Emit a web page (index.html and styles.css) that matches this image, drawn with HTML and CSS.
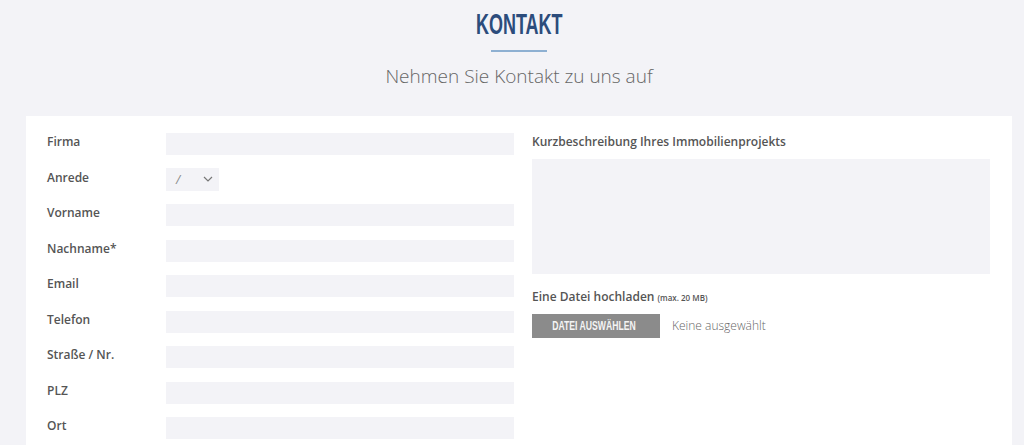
FILE: index.html
```html
<!DOCTYPE html>
<html>
  <head>
    <meta charset="utf-8">
    <title>Kontakt</title>
    <link rel="stylesheet" href="styles.css">
  </head>
  <body>
    <div class="header">
      <h1><span>KONTAKT</span></h1>
      <div class="divider"></div>
      <p class="subtitle">Nehmen Sie Kontakt zu uns auf</p>
    </div>
    <div class="card">
      <div class="col-left">
        <div class="field">
          <label for="firma">Firma</label>
          <input id="firma" type="text">
        </div>
        <div class="field">
          <label for="anrede">Anrede</label>
          <div class="select">
            <span class="select-value">/</span>
            <svg class="chevron" width="10" height="6" viewBox="0 0 10 6"><path d="M1 1l4 4 4-4" fill="none" stroke="#777" stroke-width="1.2"/></svg>
          </div>
        </div>
        <div class="field">
          <label for="vorname">Vorname</label>
          <input id="vorname" type="text">
        </div>
        <div class="field">
          <label for="nachname">Nachname*</label>
          <input id="nachname" type="text">
        </div>
        <div class="field">
          <label for="email">Email</label>
          <input id="email" type="text">
        </div>
        <div class="field">
          <label for="telefon">Telefon</label>
          <input id="telefon" type="text">
        </div>
        <div class="field">
          <label for="strasse">Straße / Nr.</label>
          <input id="strasse" type="text">
        </div>
        <div class="field">
          <label for="plz">PLZ</label>
          <input id="plz" type="text">
        </div>
        <div class="field">
          <label for="ort">Ort</label>
          <input id="ort" type="text">
        </div>
      </div>
      <div class="col-right">
        <label class="block-label" for="beschreibung">Kurzbeschreibung Ihres Immobilienprojekts</label>
        <textarea id="beschreibung"></textarea>
        <div class="block-label upload-label">Eine Datei hochladen <small>(max. 20 MB)</small></div>
        <div class="upload">
          <button class="upload-btn"><span>DATEI AUSWÄHLEN</span></button>
          <span class="upload-status">Keine ausgewählt</span>
        </div>
      </div>
    </div>
  </body>
</html>
```

FILE: styles.css
```css
* {
    box-sizing: border-box;
}

body {
    margin: 0;
    background: #f3f3f7;
    font-family: "Open Sans", "Liberation Sans", sans-serif;
    color: #555;
}

.header {
    text-align: center;
    padding-top: 9px;
    height: 116px;
    margin: 0 12px 0 26px;
}
h1 {
    margin: 0;
    font-family: "Liberation Sans Narrow", "Liberation Sans", sans-serif;
    font-size: 30px;
    line-height: 30px;
    font-weight: bold;
    color: #2c4c7c;
}
h1 span {
    display: inline-block;
    transform: scaleX(0.6);
}
.divider {
    width: 56px;
    height: 2px;
    background: #8eb0d2;
    margin: 11px auto 0;
}
.subtitle {
    margin: 12px 0 0;
    font-size: 19px;
    font-weight: 300;
    color: #666;
    line-height: 24px;
}

.card {
    display: flex;
    background: #fff;
    margin: 0 12px 0 26px;
    padding: 17px 22px 0 21px;
    height: 340px;
}
.col-left {
    width: 467px;
}
.col-right {
    margin-left: 18px;
    flex: 1;
}

.field {
    display: flex;
    align-items: flex-start;
    height: 22px;
    margin-bottom: 13.5px;
}
.field label {
    width: 119px;
    font-size: 12px;
    line-height: 17px;
    font-weight: 600;
}
.field input {
    flex: 1;
    height: 22px;
    border: none;
    background: #f3f3f7;
}
.select {
    display: flex;
    align-items: center;
    justify-content: space-between;
    width: 53px;
    height: 23px;
    margin-top: -1px;
    background: #f3f3f7;
    padding: 0 6px 0 10px;
    font-size: 12px;
    color: #888;
}
.select-value {
    font-style: italic;
}

.block-label {
    display: block;
    font-size: 12px;
    font-weight: 600;
    line-height: 17px;
}
textarea {
    display: block;
    width: 100%;
    height: 115px;
    margin-top: 9px;
    border: none;
    background: #f3f3f7;
    resize: none;
}
.upload-label {
    margin-top: 13.5px;
}
.upload-label small {
    font-size: 8px;
}
.upload {
    display: flex;
    align-items: center;
    margin-top: 8px;
}
.upload-btn {
    width: 128px;
    height: 24px;
    border: none;
    background: #8b8b8b;
    color: #f4f4f4;
    font-family: "Liberation Sans Narrow", "Liberation Sans", sans-serif;
    font-size: 12px;
    font-weight: bold;
    padding: 0 4px 0 0;
}
.upload-btn span {
    display: inline-block;
    transform: scaleX(0.72);
}
.upload-status {
    margin-left: 12px;
    font-size: 12px;
    font-weight: 300;
    color: #666;
}
```
